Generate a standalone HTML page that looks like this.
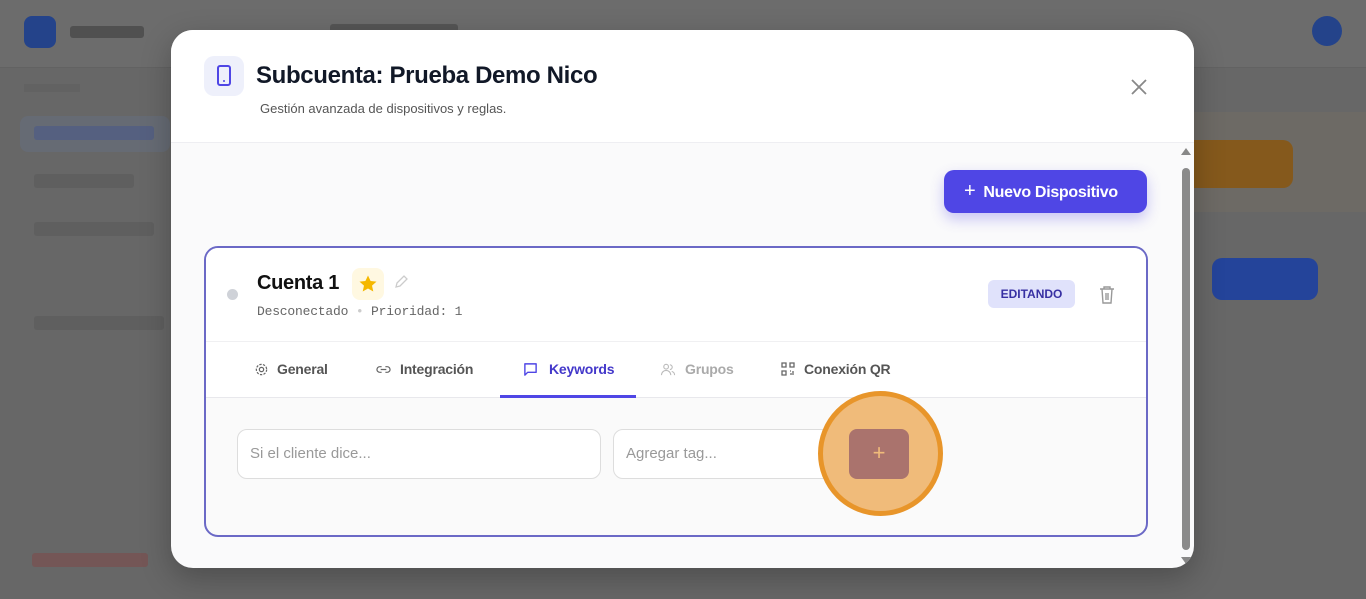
<!DOCTYPE html>
<html><head><meta charset="utf-8"><style>
*{box-sizing:border-box;margin:0;padding:0}
body{width:1366px;height:599px;overflow:hidden;background:#676767;font-family:"Liberation Sans",sans-serif;position:relative}
.abs{position:absolute}
</style></head><body>
<div class="abs" style="left:0;top:0;width:1366px;height:68px;background:#6c6c6c;border-bottom:1px solid #626262"></div>
<div class="abs" style="left:24px;top:16px;width:32px;height:32px;border-radius:8px;background:#24438a"></div>
<div class="abs" style="left:70px;top:26px;width:74px;height:12px;background:#505050;border-radius:3px"></div>
<div class="abs" style="left:330px;top:24px;width:128px;height:14px;background:#555;border-radius:3px"></div>
<div class="abs" style="left:24px;top:84px;width:56px;height:8px;background:#626262"></div>
<div class="abs" style="left:20px;top:116px;width:150px;height:36px;background:#666b74;border-radius:8px"></div>
<div class="abs" style="left:34px;top:126px;width:120px;height:14px;background:#556080;border-radius:3px"></div>
<div class="abs" style="left:34px;top:174px;width:100px;height:14px;background:#5f5f5f;border-radius:3px"></div>
<div class="abs" style="left:34px;top:222px;width:120px;height:14px;background:#5f5f5f;border-radius:3px"></div>
<div class="abs" style="left:34px;top:316px;width:130px;height:14px;background:#5f5f5f;border-radius:3px"></div>
<div class="abs" style="left:32px;top:553px;width:116px;height:14px;background:#745656;border-radius:3px"></div>
<div class="abs" style="left:1312px;top:16px;width:30px;height:30px;border-radius:50%;background:#24438a"></div>
<div class="abs" style="left:1190px;top:112px;width:176px;height:100px;background:#6d6a65"></div>
<div class="abs" style="left:1180px;top:140px;width:113px;height:48px;background:#85591c;border-radius:10px"></div>
<div class="abs" style="left:1212px;top:258px;width:106px;height:42px;background:#24449a;border-radius:10px"></div>

<div class="abs" style="left:171px;top:30px;width:1023px;height:538px;background:#fafafb;border-radius:22px;overflow:hidden;box-shadow:0 10px 30px rgba(0,0,0,.25)">
  <div class="abs" style="left:0;top:0;width:1023px;height:113px;background:#fff;border-bottom:1px solid #eeeef2"></div>
  <div class="abs" style="left:33px;top:26px;width:40px;height:40px;border-radius:10px;background:#eef0fb">
    <svg width="40" height="40" viewBox="0 0 40 40"><rect x="14" y="10" width="12" height="19" rx="2" fill="none" stroke="#4f46e5" stroke-width="2"/><circle cx="20" cy="25" r="1" fill="#4f46e5"/></svg>
  </div>
  <div class="abs" style="left:85px;top:32px;font-size:24px;font-weight:bold;color:#111827;letter-spacing:-0.35px">Subcuenta: Prueba Demo Nico</div>
  <div class="abs" style="left:89px;top:71px;font-size:13px;color:#555">Gestión avanzada de dispositivos y reglas.</div>
  <svg class="abs" style="left:959px;top:48px" width="18" height="18" viewBox="0 0 18 18"><path d="M2 2L16 16M16 2L2 16" stroke="#888" stroke-width="1.8"/></svg>

  <div class="abs" style="left:773px;top:140px;width:203px;height:43px;background:#4f46e5;border-radius:10px;box-shadow:0 6px 14px rgba(79,70,229,.3);color:#fff;font-weight:bold;font-size:16px;line-height:43px;padding-left:20px;letter-spacing:-0.3px"><span style="font-weight:normal;font-size:20px;margin-right:8px">+</span>Nuevo Dispositivo</div>

  <div class="abs" style="left:33px;top:216px;width:944px;height:291px;border:2px solid #6b69c6;border-radius:14px;background:#fafafa;overflow:hidden">
    <div class="abs" style="left:0;top:0;width:940px;height:94px;background:#fff;border-bottom:1px solid #f0f0f2"></div>
    <div class="abs" style="left:21px;top:41px;width:11px;height:11px;border-radius:50%;background:#cfd2d8"></div>
    <div class="abs" style="left:51px;top:24px;font-size:20px;font-weight:bold;color:#111;letter-spacing:-0.3px">Cuenta 1</div>
    <div class="abs" style="left:146px;top:20px;width:32px;height:32px;border-radius:8px;background:#fff8e1">
      <svg width="32" height="32" viewBox="0 0 32 32"><path d="M16 7.5L18.6 13L24.5 13.6L20 17.6L21.3 23.5L16 20.5L10.7 23.5L12 17.6L7.5 13.6L13.4 13Z" fill="#f5b800"/></svg></div>
    <svg class="abs" style="left:186px;top:25px" width="18" height="18" viewBox="0 0 18 18"><path d="M4 14L5 10L12 3L15 6L8 13Z" fill="none" stroke="#ccc" stroke-width="1.3"/></svg>
    <div class="abs" style="left:51px;top:56px;font-family:'Liberation Mono',monospace;font-size:13px;color:#666;letter-spacing:-0.2px">Desconectado <span style="color:#ccc">•</span> Prioridad: 1</div>
    <div class="abs" style="left:782px;top:32px;width:87px;height:28px;border-radius:6px;background:#e0e2fb;color:#3730a3;font-size:12px;font-weight:bold;text-align:center;line-height:28px">EDITANDO</div>
    <svg class="abs" style="left:892px;top:37px" width="18" height="20" viewBox="0 0 18 20"><path d="M2 4H16M6 4V2H12V4M4 4L5 18H13L14 4M8 8V15M10 8V15" fill="none" stroke="#999" stroke-width="1.4"/></svg>
    <div class="abs" style="left:0;top:94px;width:940px;height:56px;background:#fff;border-bottom:1px solid #e8e8ec"></div>
    <div class="abs" style="top:113px;left:48px;font-size:14px;font-weight:bold;color:#555;white-space:nowrap;letter-spacing:-0.2px">
      <svg style="position:absolute;left:0;top:1px" width="15" height="15" viewBox="0 0 16 16"><circle cx="8" cy="8" r="2.3" fill="none" stroke="#666" stroke-width="1.3"/><circle cx="8" cy="8" r="5.5" fill="none" stroke="#666" stroke-width="1.3" stroke-dasharray="2.5 1.4"/></svg>
      <span style="position:absolute;left:23px">General</span>
      <svg style="position:absolute;left:122px;top:1px" width="15" height="15" viewBox="0 0 16 16"><path d="M6 5H4a3 3 0 000 6h2M10 5h2a3 3 0 010 6h-2M5 8h6" fill="none" stroke="#666" stroke-width="1.3"/></svg>
      <span style="position:absolute;left:146px">Integración</span>
      <svg style="position:absolute;left:269px;top:1px" width="15" height="15" viewBox="0 0 16 16"><path d="M2 2H14V11H5L2 14Z" fill="none" stroke="#4f46e5" stroke-width="1.5" stroke-linejoin="round"/></svg>
      <span style="position:absolute;left:295px;color:#4338ca">Keywords</span>
      <svg style="position:absolute;left:406px;top:1px" width="16" height="15" viewBox="0 0 16 16"><circle cx="6" cy="5" r="2.5" fill="none" stroke="#bbb" stroke-width="1.2"/><path d="M1 14a5 5 0 0110 0M10 3a2.5 2.5 0 010 5M12 10a4 4 0 013 4" fill="none" stroke="#bbb" stroke-width="1.2"/></svg>
      <span style="position:absolute;left:431px;color:#aaa">Grupos</span>
      <svg style="position:absolute;left:527px;top:1px" width="14" height="14" viewBox="0 0 14 14"><path d="M1 1h4v4H1zM9 1h4v4H9zM1 9h4v4H1zM9 9h1M12 9v2M9 12h4" fill="none" stroke="#666" stroke-width="1.3"/></svg>
      <span style="position:absolute;left:550px">Conexión QR</span>
    </div>
    <div class="abs" style="left:294px;top:147px;width:136px;height:3px;background:#4f46e5"></div>
    <div class="abs" style="left:31px;top:181px;width:364px;height:50px;border:1px solid #ddd;border-radius:10px;background:#fff;font-size:15px;color:#999;line-height:48px;padding-left:12px">Si el cliente dice...</div>
    <div class="abs" style="left:407px;top:181px;width:224px;height:50px;border:1px solid #ddd;border-radius:10px;background:#fff;font-size:15px;color:#999;line-height:48px;padding-left:12px">Agregar tag...</div>
  </div>
  <div class="abs" style="left:647px;top:361px;width:125px;height:125px;border-radius:50%;border:5px solid #e8952a;background:#f0bb7a"></div>
  <div class="abs" style="left:678px;top:399px;width:60px;height:50px;border-radius:8px;background:#aa736d;color:#f0bb7a;font-size:22px;text-align:center;line-height:48px">+</div>
  <div class="abs" style="left:1010px;top:118px;width:0;height:0;border-left:5px solid transparent;border-right:5px solid transparent;border-bottom:7px solid #888"></div>
  <div class="abs" style="left:1011px;top:138px;width:8px;height:382px;border-radius:4px;background:#8a8a8a"></div>
  <div class="abs" style="left:1010px;top:527px;width:0;height:0;border-left:5px solid transparent;border-right:5px solid transparent;border-top:7px solid #888"></div>
</div>
</body></html>
